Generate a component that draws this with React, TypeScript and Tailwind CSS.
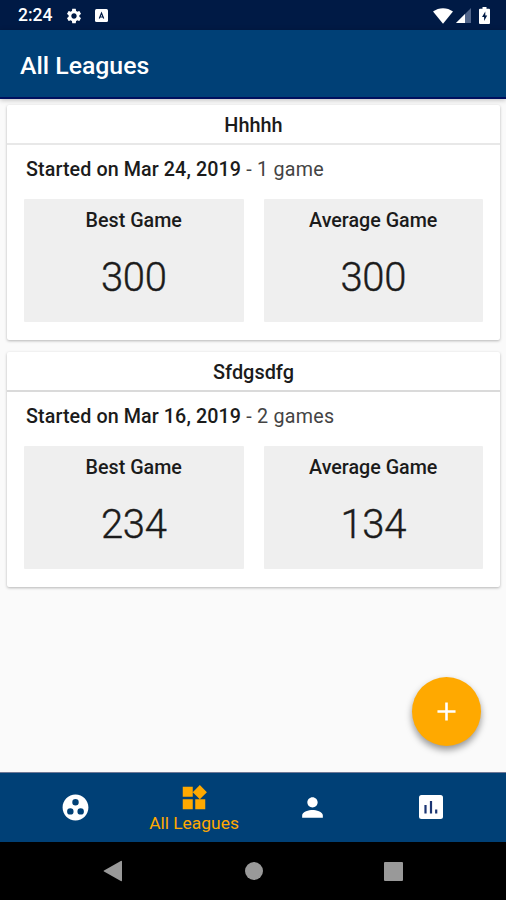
import { MdAdd, MdGroupWork, MdPerson, MdSettings, MdWidgets } from 'react-icons/md';

interface League {
  name: string;
  startDate: string;
  games: string;
  best: number;
  average: number;
  dividerClass: string;
}

const leagues: League[] = [
  { name: 'Hhhhh', startDate: 'Mar 24, 2019', games: '1 game', best: 300, average: 300, dividerClass: 'border-[#e8e8e8]' },
  { name: 'Sfdgsdfg', startDate: 'Mar 16, 2019', games: '2 games', best: 234, average: 134, dividerClass: 'border-[#dadada]' },
];

function StatusBar() {
  return (
    <div className="flex h-[30px] shrink-0 items-center bg-[#001a45] pl-[18px] pr-[16px] pt-px text-white">
      <span className="w-[47px] text-[17.5px] font-medium leading-none">2:24</span>
      <MdSettings className="size-[18px]" />
      <svg viewBox="0 0 13 13" className="ml-3 size-[13px]">
        <rect width="13" height="13" rx="1.5" fill="currentColor" />
        <path d="M4.3 9.5 6.5 4 8.7 9.5M5.5 8h2" fill="none" stroke="#001a45" strokeWidth="1.2" />
      </svg>
      <div className="ml-auto flex items-center">
        <svg viewBox="0 0 20 16" className="h-4 w-5">
          <path d="M0 3.6C5.8-.9 14.2-.9 20 3.6L10 15.8Z" fill="currentColor" />
        </svg>
        <svg viewBox="0 0 15 15" className="ml-[3px] size-[15px]">
          <path d="M15 0V15H0Z" fill="#51658a" />
          <path d="M9 6V15H0Z" fill="currentColor" />
        </svg>
        <svg viewBox="0 0 11 17" className="ml-2 h-[17px] w-[11px]">
          <path d="M3.5 0h4v1.7H10a1 1 0 0 1 1 1V16a1 1 0 0 1-1 1H1a1 1 0 0 1-1-1V2.7a1 1 0 0 1 1-1h2.5Z" fill="currentColor" />
          <path d="M6.3 4.6 3 10h2.1v3.9L8.2 8.5H6.3Z" fill="#001a45" />
        </svg>
      </div>
    </div>
  );
}

function StatBox({ label, value }: { label: string; value: number }) {
  return (
    <div className="flex h-[123px] flex-1 flex-col items-center rounded-[1px] bg-[#efefef] pt-[10px]">
      <span className="text-[19.7px] font-medium leading-6">{label}</span>
      <span className="mt-[21px] text-[40px] font-light leading-[48px] tracking-[-0.4px] [-webkit-text-stroke:0.4px]">
        {value}
      </span>
    </div>
  );
}

function LeagueCard({ league }: { league: League }) {
  return (
    <section className="h-[235px] rounded-[2px] bg-white shadow-[0_1px_3px_rgba(0,0,0,0.28)]">
      <h2 className={`h-10 border-b-2 text-center text-[19.9px] font-medium leading-[42px] ${league.dividerClass}`}>
        {league.name}
      </h2>
      <p className="h-[54px] whitespace-pre pl-[19px] pt-[13px] text-[19.7px] leading-6 tracking-[0.1px]">
        <span className="font-medium">Started on {league.startDate}</span>
        <span className="tracking-[0.25px] text-[#444]"> - {league.games}</span>
      </p>
      <div className="flex gap-5 px-[17px]">
        <StatBox label="Best Game" value={league.best} />
        <StatBox label="Average Game" value={league.average} />
      </div>
    </section>
  );
}

function BottomTabs() {
  return (
    <nav className="flex h-[70px] shrink-0 items-center justify-center border-t border-[#6e7896] bg-[#004076] pl-px text-white">
      <button className="flex w-[118px] justify-center">
        <MdGroupWork className="size-[31px]" />
      </button>
      <button className="flex w-[119px] flex-col items-center text-[#ffa900]">
        <MdWidgets className="size-[30px]" />
        <span className="text-[17.4px] leading-[20px]">All Leagues</span>
      </button>
      <button className="flex w-[118px] justify-center">
        <MdPerson className="size-[31px]" />
      </button>
      <button className="flex w-[119px] justify-center pb-[2px]">
        <svg viewBox="0 0 24 24" className="size-[24px]">
          <rect width="24" height="24" rx="2.5" fill="currentColor" />
          <path d="M6.5 10v8.5M12 6v12.500M17.200 14.500v4" fill="none" stroke="#1b3573" strokeWidth="2.2" />
        </svg>
      </button>
    </nav>
  );
}

function SystemNav() {
  return (
    <div className="flex h-[58px] shrink-0 items-center justify-center bg-black pl-px text-[#999]">
      <div className="flex w-[140px] justify-center pr-[3px]">
        <svg viewBox="0 0 19 22" className="h-[22px] w-[19px]">
          <path d="M19 1.5V20.5a.8.8 0 0 1-1.2.6L1 11.6a.7.7 0 0 1 0-1.2L17.8.9A.8.8 0 0 1 19 1.5Z" fill="currentColor" />
        </svg>
      </div>
      <div className="flex w-[140px] justify-center">
        <div className="size-[18px] rounded-full bg-[#999]" />
      </div>
      <div className="flex w-[140px] justify-center">
        <div className="size-[19px] rounded-[1px] bg-[#999]" />
      </div>
    </div>
  );
}

export default function App() {
  return (
    <div className="relative flex h-[900px] w-[506px] flex-col overflow-hidden bg-[#fafafa] font-['Roboto',sans-serif] text-[#1b1b1b]">
      <StatusBar />
      <header className="flex h-[69px] shrink-0 items-center border-b-2 border-[#00105e] bg-[#004076] pl-5 pt-[5px] text-[24.8px] font-medium text-white shadow-[0_1px_5px_rgba(0,0,0,0.25)]">
        All Leagues
      </header>
      <main className="flex flex-1 flex-col gap-3 px-[7px] pr-[6px] pt-[6px]">
        {leagues.map(league => (
          <LeagueCard key={league.name} league={league} />
        ))}
      </main>
      <BottomTabs />
      <SystemNav />

      {/* Floating add button */}
      <button className="absolute right-[25px] top-[677px] flex size-[69px] items-center justify-center rounded-full bg-[#ffa900] text-white shadow-[0_4px_7px_rgba(0,0,0,0.4)]">
        <MdAdd className="size-[31px]" />
      </button>
    </div>
  );
}
